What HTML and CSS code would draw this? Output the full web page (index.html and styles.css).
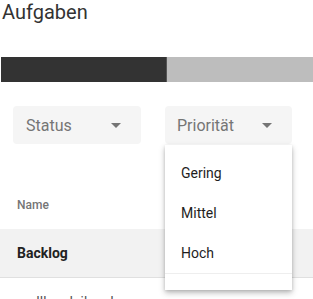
FILE: index.html
```html
<!DOCTYPE html>
<html lang="de">
<head>
    <meta charset="UTF-8">
    <meta name="viewport" content="width=device-width, initial-scale=1.0">
    <title>Aufgaben</title>
    <link rel="stylesheet" href="styles.css">
</head>
<body>
    <h1 class="title">Aufgaben</h1>

    <div class="progress">
        <div class="progress-done"></div>
        <div class="progress-rest"></div>
    </div>

    <div class="filters">
        <div class="select">
            <span class="select-label">Status</span>
            <span class="select-arrow"></span>
        </div>
        <div class="select">
            <span class="select-label">Priorität</span>
            <span class="select-arrow"></span>
            <ul class="menu">
                <li class="menu-item">Gering</li>
                <li class="menu-item">Mittel</li>
                <li class="menu-item">Hoch</li>
                <li class="menu-empty"></li>
            </ul>
        </div>
    </div>

    <table class="tasks">
        <thead>
            <tr><th>Name</th></tr>
        </thead>
        <tbody>
            <tr class="group"><td>Backlog</td></tr>
            <tr><td>asdlkasdajkasds</td></tr>
        </tbody>
    </table>
</body>
</html>
```

FILE: styles.css
```css
body {
    margin: 0;
    font-family: Roboto, "Liberation Sans", Arial, sans-serif;
    color: #333;
    background: #fff;
}
.title {
    margin: 0;
    padding-left: 2px;
    font-size: 20px;
    line-height: 24px;
    font-weight: 400;
    color: #333;
}
.progress {
    display: flex;
    height: 25px;
    margin-top: 33px;
    margin-left: 1px;
}
.progress-done {
    width: 165px;
    background: #333;
    border-right: 1px solid #555;
}
.progress-rest {
    flex: 1;
    background: #bdbdbd;
}
.filters {
    display: flex;
    gap: 24px;
    margin-top: 24px;
    padding-left: 13px;
    position: relative;
    z-index: 2;
}
.select {
    position: relative;
    display: flex;
    align-items: center;
    justify-content: space-between;
    box-sizing: border-box;
    width: 128px;
    height: 38px;
    padding: 1px 20px 0 13px;
    background: #f5f5f5;
    border-radius: 4px;
}
.select + .select {
    width: 127px;
    padding-left: 12px;
}
.select-label {
    font-size: 16px;
    color: #757575;
}
.select-arrow {
    width: 0;
    height: 0;
    border-left: 5px solid transparent;
    border-right: 5px solid transparent;
    border-top: 5px solid #757575;
}
.menu {
    position: absolute;
    top: 39px;
    left: 0;
    width: 127px;
    margin: 0;
    padding: 8px 0 0;
    list-style: none;
    background: #fff;
    box-shadow: 0 3px 6px rgba(0, 0, 0, 0.25), 0 1px 3px rgba(0, 0, 0, 0.12);
}
.menu-item {
    height: 40px;
    line-height: 40px;
    padding: 0 16px;
    font-size: 14px;
    font-weight: 400;
    color: #1e1e1e;
}
.menu-empty {
    height: 16px;
    border-top: 1px solid #eee;
}
.tasks {
    width: 100%;
    margin-top: 37px;
    border-collapse: collapse;
}
.tasks th {
    height: 48px;
    padding: 0 17px;
    text-align: left;
    font-size: 12px;
    font-weight: 500;
    color: #757575;
}
.tasks td {
    height: 48px;
    padding: 0 17px;
    font-size: 14px;
    color: #555;
    border-bottom: 1px solid #e0e0e0;
}
.tasks .group td {
    background: #f2f2f2;
    font-weight: 700;
    color: #222;
}
```
